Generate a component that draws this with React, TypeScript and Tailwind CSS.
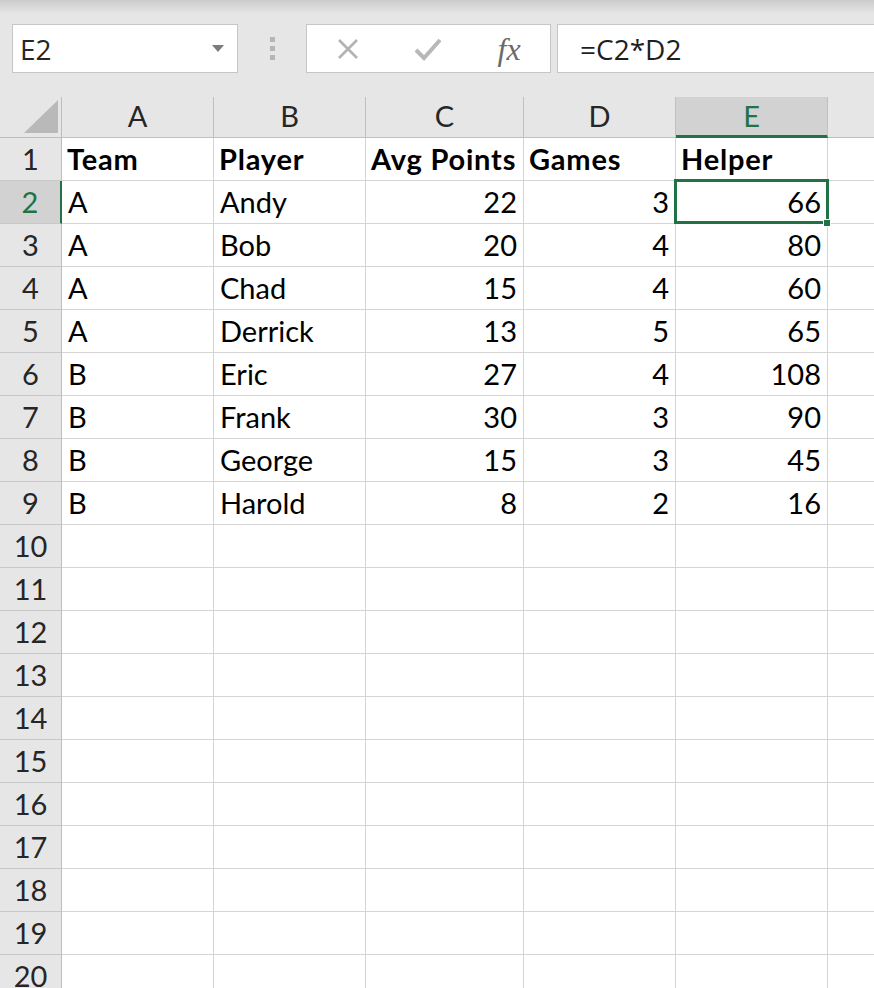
import React from "react";

const cellFont = { fontFamily: "Lato, 'Open Sans', sans-serif" };

type Row = { team: string; player: string; avg: number; games: number };

const rows: Row[] = [
  { team: "A", player: "Andy", avg: 22, games: 3 },
  { team: "A", player: "Bob", avg: 20, games: 4 },
  { team: "A", player: "Chad", avg: 15, games: 4 },
  { team: "A", player: "Derrick", avg: 13, games: 5 },
  { team: "B", player: "Eric", avg: 27, games: 4 },
  { team: "B", player: "Frank", avg: 30, games: 3 },
  { team: "B", player: "George", avg: 15, games: 3 },
  { team: "B", player: "Harold", avg: 8, games: 2 },
];

const columns = ["A", "B", "C", "D", "E"];

function Toolbar() {
  return (
    <div className="flex h-[97px] items-start bg-[linear-gradient(#cbcbcb,#e6e6e6_14px)] pl-[12px] pt-[24px]">
      <div className="flex h-[49px] w-[226px] items-center justify-between border border-[#c6c6c6] bg-white pl-[7px] pr-[12px]">
        <span className="text-[28px] text-[#262626]" style={{ fontFamily: "'Open Sans', sans-serif" }}>
          E2
        </span>
        <svg width="14" height="8" viewBox="0 0 14 8">
          <path d="M1 0 L13 0 L7 7 Z" fill="#7b7b7b" />
        </svg>
      </div>
      <div className="flex h-[49px] w-[68px] flex-col items-center justify-center gap-[4px]">
        <div className="h-[5px] w-[5px] bg-[#b5b5b5]" />
        <div className="h-[5px] w-[5px] bg-[#b5b5b5]" />
        <div className="h-[5px] w-[5px] bg-[#b5b5b5]" />
      </div>
      <div className="flex h-[49px] w-[245px] items-center border border-[#c6c6c6] bg-white">
        <div className="flex w-[82px] justify-center">
          <svg width="24" height="22" viewBox="0 0 24 22">
            <path d="M3 2 L21 20 M21 2 L3 20" stroke="#b3b3b3" strokeWidth="2.6" />
          </svg>
        </div>
        <div className="flex w-[80px] justify-center">
          <svg width="28" height="24" viewBox="0 0 28 24">
            <path d="M2 13 L10 21 L26 3" stroke="#b8b8b8" strokeWidth="4" fill="none" />
          </svg>
        </div>
        <div className="flex w-[82px] justify-center">
          <span
            className="text-[32px] italic text-[#6a6a6a]"
            style={{ fontFamily: "'Liberation Serif', serif" }}
          >
            fx
          </span>
        </div>
      </div>
      <div className="ml-[6px] flex h-[49px] flex-1 items-center border-y border-l border-[#c6c6c6] bg-white pl-[22px]">
        <span className="text-[28px] text-[#1f1f1f]" style={{ fontFamily: "'Open Sans', sans-serif" }}>
          =C2*D2
        </span>
      </div>
    </div>
  );
}

function HeaderRow() {
  return (
    <>
      <div className="relative h-[41px] border-r border-b border-[#bdbdbd] bg-[#e6e6e6]">
        <svg className="absolute right-[3px] bottom-[4px]" width="34" height="33" viewBox="0 0 34 33">
          <path d="M34 0 L34 33 L0 33 Z" fill="#b9b9b9" />
        </svg>
      </div>
      {columns.map((c) => (
        <div
          key={c}
          className={
            c === "E"
              ? "flex h-[41px] items-end justify-center border-r border-b-[3px] border-r-[#c0c0c0] border-b-[#217346] bg-[#d2d2d2] pb-[5px] text-[29px] leading-none text-[#217346]"
              : "flex h-[41px] items-end justify-center border-r border-b border-[#c0c0c0] bg-[#e6e6e6] pb-[7px] text-[29px] leading-none text-[#262626]"
          }
          style={cellFont}
        >
          {c}
        </div>
      ))}
      <div className="h-[41px] border-b border-[#bdbdbd] bg-[#e6e6e6]" />
    </>
  );
}

function RowHeader({ n, active }: { n: number; active?: boolean }) {
  return (
    <div
      className={
        active
          ? "flex h-[43px] items-end justify-center border-r-[2px] border-b border-r-[#217346] border-b-[#c8c8c8] bg-[#d2d2d2] pb-[7px] text-[29px] leading-none text-[#217346]"
          : "flex h-[43px] items-end justify-center border-r border-b border-r-[#bdbdbd] border-b-[#c8c8c8] bg-[#e6e6e6] pb-[7px] text-[29px] leading-none text-[#262626]"
      }
      style={cellFont}
    >
      {n}
    </div>
  );
}

function Cell({
  children,
  right,
  bold,
  last,
}: {
  children?: React.ReactNode;
  right?: boolean;
  bold?: boolean;
  last?: boolean;
}) {
  return (
    <div
      className={
        "flex h-[43px] items-end whitespace-nowrap border-b border-[#d4d4d4] pb-[7px] text-[29px] leading-none text-black " +
        (last ? "" : "border-r ") +
        (right ? "justify-end " : "justify-start ") +
        (bold ? "pl-[5px] pr-0 font-bold tracking-[0.8px]" : "px-[6px] font-normal")
      }
      style={cellFont}
    >
      {children}
    </div>
  );
}

function SelectedCell({ value }: { value: number }) {
  return (
    <div
      className="relative flex h-[43px] items-end justify-end border-r border-b border-[#d4d4d4] px-[6px] pb-[7px] text-[29px] leading-none text-black"
      style={cellFont}
    >
      {value}
      <div className="pointer-events-none absolute -top-[2px] -left-[2px] -right-[2px] -bottom-[1px] border-[3px] border-[#217346]" />
      <div className="absolute -right-[4px] -bottom-[4px] h-[8px] w-[8px] border border-white bg-[#217346]" />
    </div>
  );
}

export default function App() {
  const empty = Array.from({ length: 11 }, (_, i) => i + 10);
  return (
    <div className="h-[988px] w-[874px] overflow-hidden bg-white">
      <Toolbar />
      <div className="grid grid-cols-[62px_152px_152px_158px_152px_152px_1fr]">
        <HeaderRow />

        <RowHeader n={1} />
        <Cell bold>Team</Cell>
        <Cell bold>Player</Cell>
        <Cell bold>Avg Points</Cell>
        <Cell bold>Games</Cell>
        <Cell bold>Helper</Cell>
        <Cell last />

        {rows.map((r, i) => (
          <React.Fragment key={r.player}>
            <RowHeader n={i + 2} active={i === 0} />
            <Cell>{r.team}</Cell>
            <Cell>{r.player}</Cell>
            <Cell right>{r.avg}</Cell>
            <Cell right>{r.games}</Cell>
            {i === 0 ? <SelectedCell value={r.avg * r.games} /> : <Cell right>{r.avg * r.games}</Cell>}
            <Cell last />
          </React.Fragment>
        ))}

        {empty.map((n) => (
          <React.Fragment key={n}>
            <RowHeader n={n} />
            <Cell />
            <Cell />
            <Cell />
            <Cell />
            <Cell />
            <Cell last />
          </React.Fragment>
        ))}
      </div>
    </div>
  );
}
